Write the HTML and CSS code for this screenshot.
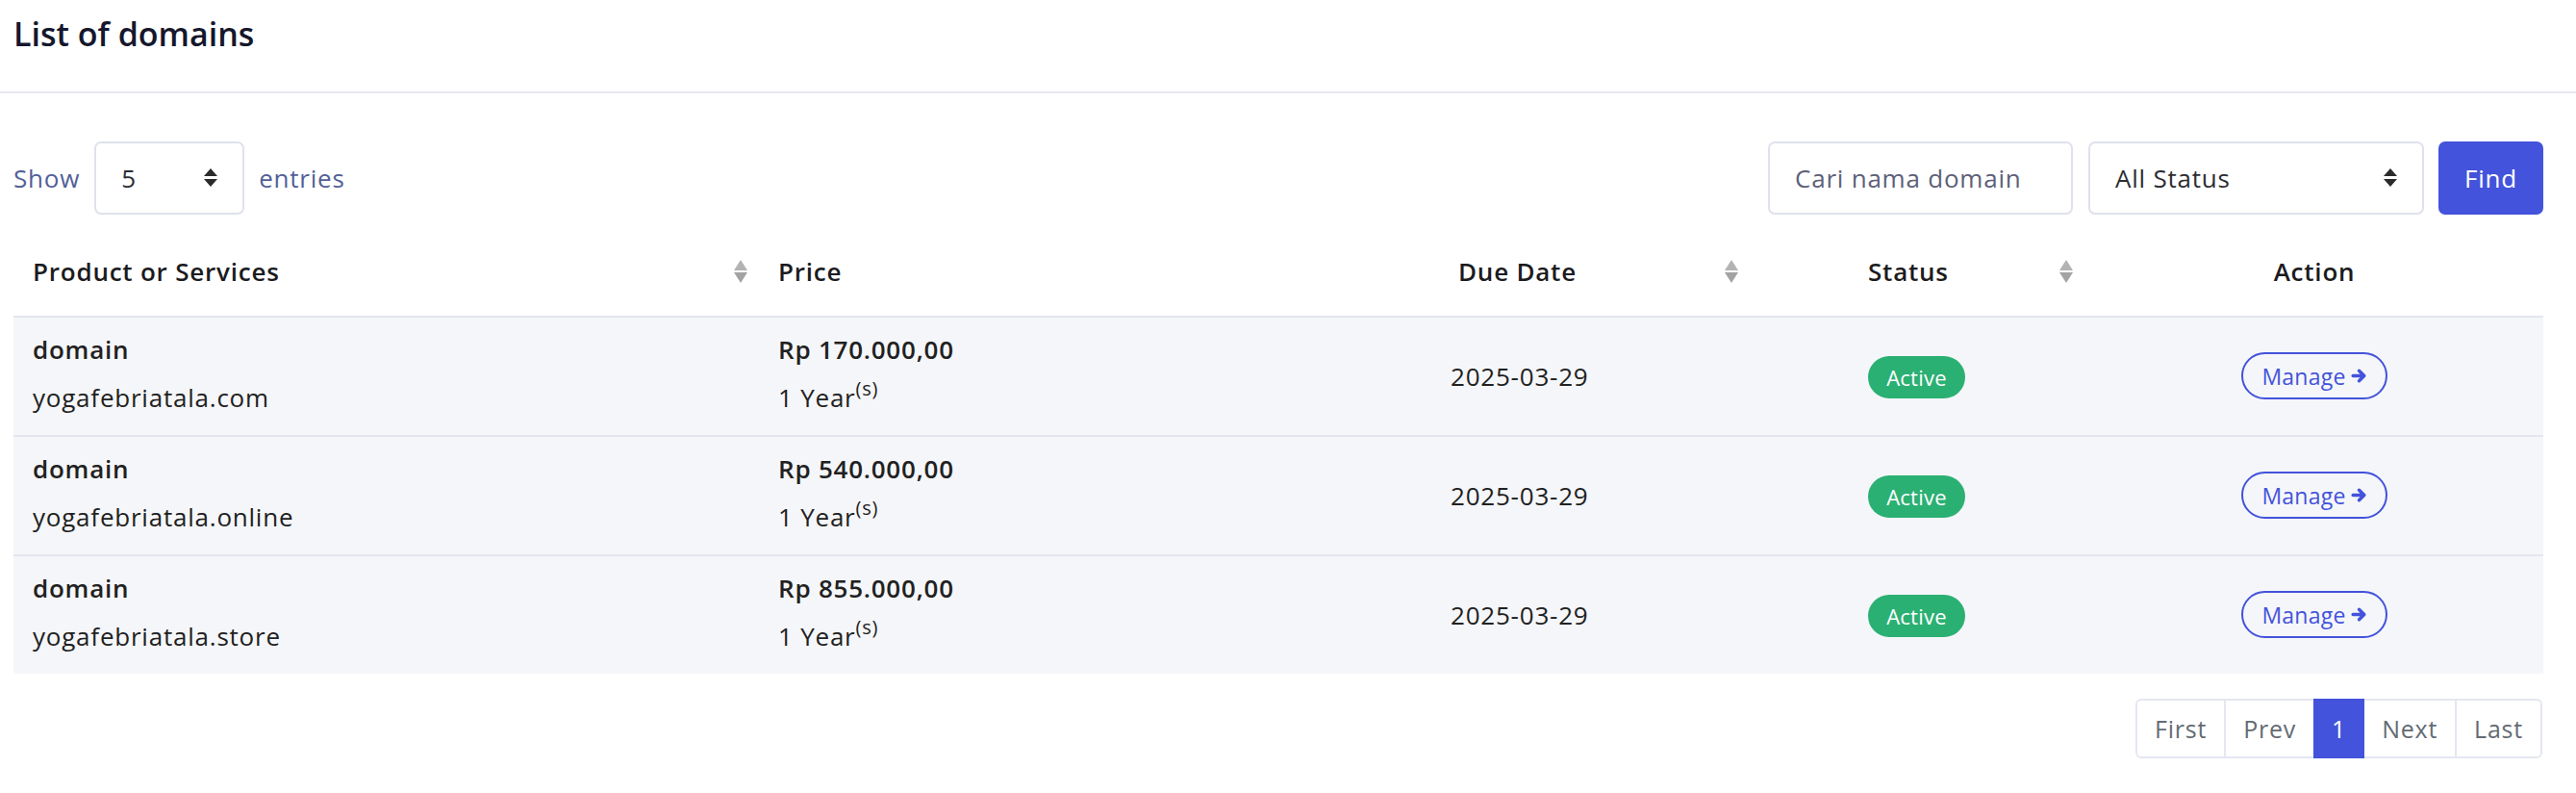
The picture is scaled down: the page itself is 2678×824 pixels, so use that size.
FILE: index.html
```html
<!DOCTYPE html>
<html lang="en">
<head>
<meta charset="utf-8">
<title>List of domains</title>
<link rel="stylesheet" href="styles.css">
</head>
<body>
<div class="page">
  <header class="page-head">
    <h1 class="title">List of domains</h1>
  </header>

  <div class="content">
    <div class="toolbar">
      <div class="length">
        <span class="muted">Show</span>
        <div class="select select-len">
          <span>5</span>
          <svg class="caret" viewBox="0 0 16 20" width="16" height="20"><path d="M8 0 L15 8 L1 8 Z M1 11 L15 11 L8 19 Z" fill="#2b2b2b"/></svg>
        </div>
        <span class="muted">entries</span>
      </div>
      <div class="filters">
        <div class="input"><span class="placeholder">Cari nama domain</span></div>
        <div class="select select-status">
          <span>All Status</span>
          <svg class="caret" viewBox="0 0 16 20" width="16" height="20"><path d="M8 0 L15 8 L1 8 Z M1 11 L15 11 L8 19 Z" fill="#2b2b2b"/></svg>
        </div>
        <button class="btn-find">Find</button>
      </div>
    </div>

    <table class="grid">
      <colgroup>
        <col class="c1"><col class="c2"><col class="c3"><col class="c4"><col class="c5">
      </colgroup>
      <thead>
        <tr>
          <th class="th-prod"><div class="th-in"><span>Product or Services</span><svg class="sort" viewBox="0 0 16 24" width="16" height="24"><path d="M8 0 L15 11 L1 11 Z" fill="#b3b3b3"/><path d="M1 13 L15 13 L8 24 Z" fill="#a3a3a3"/></svg></div></th>
          <th class="th-price"><div class="th-in"><span>Price</span></div></th>
          <th class="th-due"><div class="th-in"><span>Due Date</span><svg class="sort" viewBox="0 0 16 24" width="16" height="24"><path d="M8 0 L15 11 L1 11 Z" fill="#b3b3b3"/><path d="M1 13 L15 13 L8 24 Z" fill="#a3a3a3"/></svg></div></th>
          <th class="th-status"><div class="th-in"><span>Status</span><svg class="sort" viewBox="0 0 16 24" width="16" height="24"><path d="M8 0 L15 11 L1 11 Z" fill="#b3b3b3"/><path d="M1 13 L15 13 L8 24 Z" fill="#a3a3a3"/></svg></div></th>
          <th class="th-action"><span>Action</span></th>
        </tr>
      </thead>
      <tbody>
        <tr>
          <td class="td-prod"><div class="strong">domain</div><div>yogafebriatala.com</div></td>
          <td class="td-price"><div class="strong">Rp 170.000,00</div><div>1 Year<sup>(s)</sup></div></td>
          <td class="td-due">2025-03-29</td>
          <td class="td-status"><span class="badge">Active</span></td>
          <td class="td-action"><a class="btn-manage" href="#">Manage<svg viewBox="0 0 16 16" width="17" height="17"><path d="M2 8 H12.5 M8 3 L13 8 L8 13" fill="none" stroke="#4353db" stroke-width="3.2" stroke-linecap="round" stroke-linejoin="round"/></svg></a></td>
        </tr>
        <tr>
          <td class="td-prod"><div class="strong">domain</div><div>yogafebriatala.online</div></td>
          <td class="td-price"><div class="strong">Rp 540.000,00</div><div>1 Year<sup>(s)</sup></div></td>
          <td class="td-due">2025-03-29</td>
          <td class="td-status"><span class="badge">Active</span></td>
          <td class="td-action"><a class="btn-manage" href="#">Manage<svg viewBox="0 0 16 16" width="17" height="17"><path d="M2 8 H12.5 M8 3 L13 8 L8 13" fill="none" stroke="#4353db" stroke-width="3.2" stroke-linecap="round" stroke-linejoin="round"/></svg></a></td>
        </tr>
        <tr>
          <td class="td-prod"><div class="strong">domain</div><div>yogafebriatala.store</div></td>
          <td class="td-price"><div class="strong">Rp 855.000,00</div><div>1 Year<sup>(s)</sup></div></td>
          <td class="td-due">2025-03-29</td>
          <td class="td-status"><span class="badge">Active</span></td>
          <td class="td-action"><a class="btn-manage" href="#">Manage<svg viewBox="0 0 16 16" width="17" height="17"><path d="M2 8 H12.5 M8 3 L13 8 L8 13" fill="none" stroke="#4353db" stroke-width="3.2" stroke-linecap="round" stroke-linejoin="round"/></svg></a></td>
        </tr>
      </tbody>
    </table>

    <div class="pager-wrap">
      <ul class="pager">
        <li class="pg">First</li>
        <li class="pg">Prev</li>
        <li class="pg active">1</li>
        <li class="pg">Next</li>
        <li class="pg">Last</li>
      </ul>
    </div>
  </div>
</div>
</body>
</html>
```

FILE: styles.css
```css
* { box-sizing: border-box; }

html, body {
  margin: 0;
  padding: 0;
  background: #ffffff;
}

body {
  font-family: "Open Sans", "Liberation Sans", sans-serif;
  font-size: 26px;
  color: #212121;
  letter-spacing: 0.03em;
}

.page-head {
  height: 97px;
  padding: 15px 14px 0;
  border-bottom: 2px solid #e6e7f1;
}

.title {
  margin: 0;
  font-size: 34px;
  line-height: 40px;
  font-weight: 600;
  color: #15172c;
  letter-spacing: 0;
}

.content {
  padding: 50px 34px 0 14px;
}

.toolbar {
  display: flex;
  justify-content: space-between;
  align-items: center;
  height: 76px;
}

.length {
  display: flex;
  align-items: center;
  gap: 15px;
}

.muted {
  color: #525f98;
}

.select,
.input {
  height: 76px;
  border: 2px solid #dfe2eb;
  border-radius: 7px;
  display: flex;
  align-items: center;
  justify-content: space-between;
  padding: 0 25px 0 26px;
  color: #2d2d33;
  background: #fff;
}

.select-len { width: 156px; }
.select-status { width: 349px; }
.input { width: 317px; }

.placeholder { color: #5d6079; white-space: nowrap; }

.filters {
  display: flex;
  align-items: center;
}

.select-status { margin-left: 16px; }

.btn-find {
  margin-left: 15px;
  width: 109px;
  height: 76px;
  border: none;
  border-radius: 7px;
  background: #4353db;
  color: #fff;
  font-family: inherit;
  font-size: 26px;
  letter-spacing: 0.03em;
}

.grid {
  margin-top: 13px;
  width: 2630px;
  table-layout: fixed;
  border-collapse: separate;
  border-spacing: 0;
}

.c1 { width: 776px; }
.c2 { width: 706px; }
.c3 { width: 324px; }
.c4 { width: 348px; }
.c5 { width: 476px; }

th {
  height: 92px;
  padding: 0 12px 0 20px;
  font-weight: 600;
  text-align: left;
  color: #1b1b20;
  vertical-align: middle;
}

.th-in {
  display: flex;
  align-items: center;
  justify-content: space-between;
}

.sort { display: block; flex: none; }

.th-price { padding-left: 19px; }
.th-status { padding-left: 122px; }
.th-action { text-align: center; padding: 0; }

td {
  height: 124px;
  border-top: 2px solid #e3e6ef;
  background: #f5f6f9;
  vertical-align: middle;
  padding: 0 20px 6px;
  line-height: 50px;
}

.strong { font-weight: 600; }

.td-price { padding-left: 19px; }
.td-due { padding-left: 12px; padding-bottom: 0; }
.td-status { padding-left: 122px; padding-bottom: 4px; }
.td-action { text-align: center; padding: 0 0 4px; }

sup {
  font-size: 20px;
  line-height: 0;
  vertical-align: 12px;
}

.badge {
  display: inline-block;
  width: 101px;
  height: 44px;
  line-height: 44px;
  border-radius: 22px;
  background: #2bb073;
  color: #fff;
  text-align: center;
  font-size: 22px;
  letter-spacing: 0.01em;
  vertical-align: middle;
}

.btn-manage {
  display: inline-flex;
  align-items: center;
  justify-content: center;
  gap: 5px;
  width: 152px;
  height: 49px;
  border: 2px solid #4353db;
  border-radius: 25px;
  color: #4353db;
  text-decoration: none;
  font-size: 23px;
  letter-spacing: 0.01em;
  vertical-align: middle;
}

.btn-manage svg { display: block; }

.pager-wrap {
  display: flex;
  justify-content: flex-end;
  margin-top: 26px;
}

.pager {
  display: flex;
  list-style: none;
  margin: 0 1px 0 0;
  padding: 0;
  border: 2px solid #e4e7f0;
  border-radius: 6px;
  height: 62px;
  color: #646b73;
  font-size: 25px;
}

.pg {
  display: flex;
  align-items: center;
  justify-content: center;
  padding: 0 18px;
  border-left: 2px solid #e4e7f0;
}

.pg:first-child { border-left: none; }

.pg.active {
  background: #4353db;
  color: #fff;
  border-left: none;
  margin: -2px 0;
  padding: 0 19px;
}

.pg.active + .pg { border-left: none; }
```
